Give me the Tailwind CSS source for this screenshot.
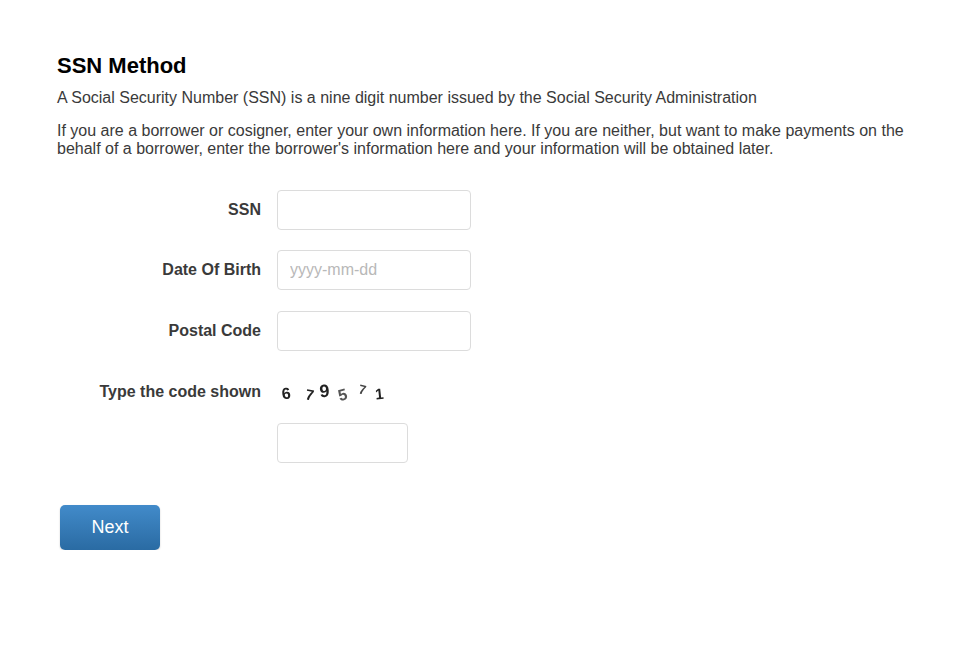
<!DOCTYPE html>
<html lang="en">
<head>
    <meta charset="UTF-8" />
    <title>SSN Method</title>
    <script src="https://cdn.jsdelivr.net/npm/@tailwindcss/browser@4"></script>
</head>
<body class="bg-white text-[#3a3a3a] font-['Liberation_Sans',Arial,sans-serif]">
    <div class="pt-[53px] pl-[57px] pr-[50px]">
        <h2 class="text-[22px] leading-[26px] font-bold text-black">SSN Method</h2>
        <p class="mt-[10px] text-[16px] leading-[18px]">A Social Security Number (SSN) is a nine digit number issued by the Social Security Administration</p>
        <p class="mt-[15px] text-[16px] leading-[18px]">If you are a borrower or cosigner, enter your own information here. If you are neither, but want to make payments on the behalf of a borrower, enter the borrower's information here and your information will be obtained later.</p>

        <form class="mt-[32px]">
            <div class="flex items-center h-[40px]">
                <label for="ssn" class="w-[204px] text-right text-[16px] font-bold">SSN</label>
                <input id="ssn" type="text" class="ml-[16px] w-[194px] h-[40px] px-3 bg-white border border-[#dcdcdc] rounded-[4px]" />
            </div>
            <div class="flex items-center h-[40px] mt-[20px]">
                <label for="dob" class="w-[204px] text-right text-[16px] font-bold">Date Of Birth</label>
                <input id="dob" type="text" placeholder="yyyy-mm-dd" class="ml-[16px] w-[194px] h-[40px] px-3 bg-white border border-[#dcdcdc] rounded-[4px] text-[16px] placeholder:text-[#b8b8b8]" />
            </div>
            <div class="flex items-center h-[40px] mt-[21px]">
                <label for="postal" class="w-[204px] text-right text-[16px] font-bold">Postal Code</label>
                <input id="postal" type="text" class="ml-[16px] w-[194px] h-[40px] px-3 bg-white border border-[#dcdcdc] rounded-[4px]" />
            </div>
            <div class="flex items-center h-[40px] mt-[21px]">
                <label for="code" class="w-[204px] text-right text-[16px] font-bold">Type the code shown</label>
                <!-- captcha digits -->
                <div class="ml-[16px] w-[120px] h-[40px] flex font-bold text-[#222] text-center blur-[0.4px] font-['Liberation_Sans',sans-serif]">
                    <span class="inline-block w-[10px] ml-[5px] mt-[14px] text-[16px] leading-[16px] rotate-[-8deg]">6</span>
                    <span class="inline-block w-[10px] ml-[12px] mt-[15px] text-[15px] leading-[16px] rotate-[10deg]">7</span>
                    <span class="inline-block w-[10px] ml-[6px] mt-[11px] text-[18px] leading-[16px] rotate-[-5deg]">9</span>
                    <span class="inline-block w-[10px] ml-[9px] mt-[15px] text-[16px] leading-[16px] rotate-[-15deg] text-[#555]">5</span>
                    <span class="inline-block w-[10px] ml-[7px] mt-[10px] text-[13px] leading-[16px] rotate-[12deg] text-[#444]">7</span>
                    <span class="inline-block w-[10px] ml-[9px] mt-[14px] text-[15px] leading-[16px] rotate-[-6deg]">1</span>
                </div>
            </div>
            <div class="ml-[220px] mt-[11px]">
                <input id="code" type="text" class="block w-[131px] h-[40px] px-3 bg-white border border-[#dcdcdc] rounded-[4px]" />
            </div>
            <button type="button" class="block ml-[3px] mt-[42px] w-[100px] h-[45px] rounded-[5px] bg-linear-to-b from-[#428bca] to-[#2a6ba3] text-white text-[18px] shadow-[0_1px_2px_rgba(0,0,0,0.2)]">Next</button>
        </form>
    </div>
</body>
</html>
